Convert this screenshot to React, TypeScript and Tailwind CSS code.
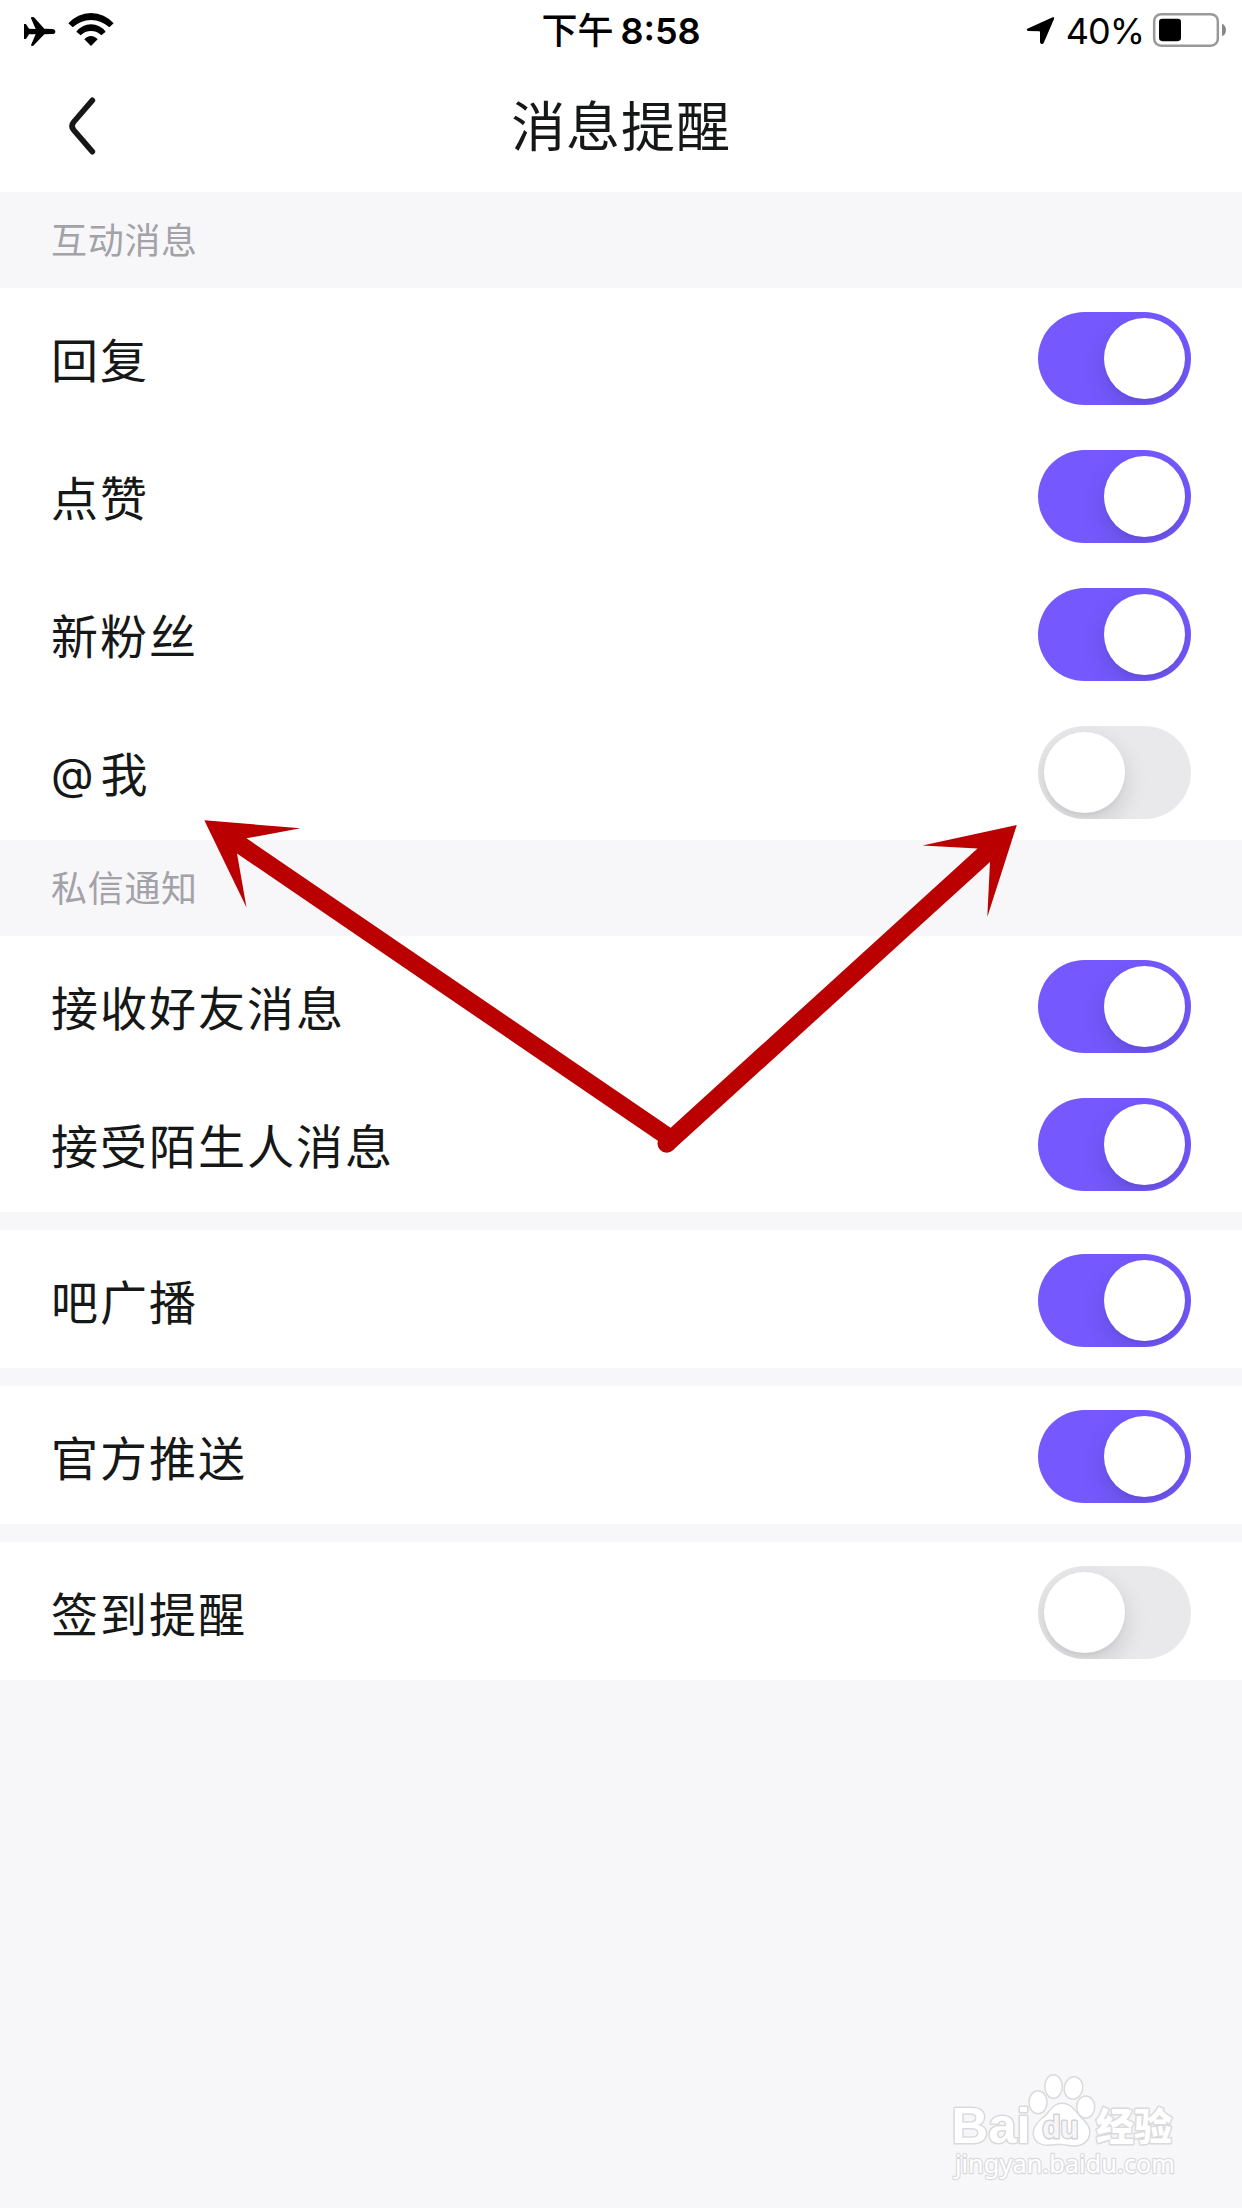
import { useState } from 'react';

type Item = { label: string; on: boolean };
type Section = { title?: string; items: Item[] };

const sections: Section[] = [
  {
    title: '互动消息',
    items: [
      { label: '回复', on: true },
      { label: '点赞', on: true },
      { label: '新粉丝', on: true },
      { label: '@我', on: false },
    ],
  },
  {
    title: '私信通知',
    items: [
      { label: '接收好友消息', on: true },
      { label: '接受陌生人消息', on: true },
    ],
  },
  { items: [{ label: '吧广播', on: true }] },
  { items: [{ label: '官方推送', on: true }] },
  { items: [{ label: '签到提醒', on: false }] },
];

function StatusBar() {
  return (
    <div className="grid h-[60px] grid-cols-3 items-start font-['Inter','Noto_Sans_CJK_SC',sans-serif] text-[36px] leading-[62px] text-black">
      <div className="flex pl-6 pt-3">
        <svg className="h-[36px] w-[92px]" viewBox="72 36 276 108">
          <path d="M72 72L77 72Q79 73 80 75L87 86L107 87L93 55Q92 51 96 51L100 51Q102 52 104 54L133 86L156 87Q166 88 166 95Q166 102 156 102L133 103L102 135Q100 138 97 138L95 138Q92 137 94 133L107 103L87 103L80 114Q79 116 77 117L72 117Z" />
          <path d="M205 70A90 90 0 0 1 341 70L328 82A80 80 0 0 0 218 82ZM229 95A55 55 0 0 1 317 95L304 106A43 43 0 0 0 242 106ZM253 118A25 25 0 0 1 293 118L273 138Z" />
        </svg>
      </div>
      <div className="flex items-center justify-center gap-[7px] whitespace-nowrap">
        <span className="font-medium">下午</span>
        <span className="font-semibold">8:58</span>
      </div>
      <div className="flex items-start justify-end pr-[15px]">
        <svg className="mr-[11px] mt-[15px] h-[31px] w-[29px]" viewBox="137 45 87 93">
          <path d="M141 86L217 52Q223 50 221 57L190 129Q187 134 182 131Q179 129 179 126L179 96Q179 94 177 94L144 93Q136 91 141 86Z" />
        </svg>
        <span className="mr-[8px] tracking-[-1px]">40%</span>
        <svg className="mt-3 h-[36px] w-[75px]" viewBox="516 36 225 108">
          <rect x="522.5" y="42.500" width="191" height="94.500" rx="21" fill="none" stroke="#999" strokeWidth="7.500" />
          <rect x="537" y="56.500" width="66" height="67" rx="10" />
          <path d="M726 71Q738 76 738 90Q738 104 726 109Z" fill="#888" />
        </svg>
      </div>
    </div>
  );
}

function NavBar() {
  return (
    <div className="grid h-[132px] grid-cols-3 items-start text-[#161717]">
      <button className="ml-[66px] mt-[34px] h-[64px] w-[33px]" aria-label="返回">
        <svg className="h-[64px] w-[33px]" viewBox="198 282 99 192">
          <path d="M277 301L221 366Q211 378 221 390L277 455" fill="none" stroke="currentColor" strokeWidth="17" strokeLinecap="round" />
        </svg>
      </button>
      <h1 className="mt-[24px] text-center text-[54px] leading-[80px] tracking-[0.9px]">消息提醒</h1>
    </div>
  );
}

function Toggle({ initial }: { initial: boolean }) {
  const [on, setOn] = useState(initial);
  return (
    <button
      role="switch"
      aria-checked={on}
      onClick={() => setOn(!on)}
      className={`flex h-[93px] w-[153px] overflow-hidden rounded-full p-[6px] ${on ? 'justify-end bg-[#7559ff]' : 'justify-start bg-[#e9e9eb]'}`}
    >
      <span className="size-[81px] rounded-full bg-white shadow-[0_9px_24px_rgba(0,0,0,0.14),0_3px_3px_rgba(0,0,0,0.03)]" />
    </button>
  );
}

function Label({ text }: { text: string }) {
  const mention = text.startsWith('@');
  return (
    <span className="mt-[10px] text-[47px] leading-[72px] tracking-[2px] text-[#161717]">
      {mention && <span className="relative -top-0.5 mr-[7px] font-['Inter'] text-[44px] tracking-normal">@</span>}
      {mention ? text.slice(1) : text}
    </span>
  );
}

function Row({ label, on }: Item) {
  return (
    <div className="flex h-[138px] items-start justify-between bg-white pl-[51px] pr-[51px] pt-6">
      <Label text={label} />
      <Toggle initial={on} />
    </div>
  );
}

function Arrows() {
  return (
    <svg className="pointer-events-none absolute left-[200px] top-[816px] h-[340px] w-[820px]" viewBox="200 816 820 340" fill="#ba0000">
      <path d="M204.300 820.300L300.500 828.300L246.500 838.300L671 1128L664 1145L237 853.500L246.500 907.500Z" />
      <path d="M1016.800 825L922.500 845.500L977.500 848.500L660.500 1137L673 1150L990 862L987.300 917Z" />
      <circle cx="666.700" cy="1143.500" r="9.200" />
    </svg>
  );
}

function Watermark() {
  return (
    <svg
      className="pointer-events-none absolute bottom-0 right-0 h-[168px] w-[342px]"
      viewBox="900 2040 342 168"
      fill="#fff"
      stroke="#dadadc"
      strokeWidth="3"
      strokeLinejoin="round"
      paintOrder="stroke"
    >
      <text x="951.500" y="2143" fontSize="50" fontWeight="700" textLength="79" lengthAdjust="spacingAndGlyphs" fontFamily="Liberation Sans, sans-serif">Bai</text>
      <ellipse cx="1038" cy="2102.300" rx="8.300" ry="10.800" />
      <ellipse cx="1053.500" cy="2086.500" rx="8" ry="11" />
      <ellipse cx="1073.500" cy="2088" rx="8.500" ry="10.500" transform="rotate(12 1073.500 2088)" />
      <ellipse cx="1085.700" cy="2107" rx="8.300" ry="10.300" />
      <path d="M1062 2104C1054 2104 1052 2110 1046 2116C1038 2122 1034 2127 1034 2133C1034 2142 1042 2145 1049 2144.500C1056 2143 1066 2144 1070 2145C1082 2146.500 1089 2141 1089 2132C1089 2124 1082 2120 1078 2115C1073 2109 1070 2104 1062 2104Z" />
      <text x="1042.500" y="2138" fontSize="31" fontWeight="700" textLength="36" lengthAdjust="spacingAndGlyphs" fontFamily="Liberation Sans, sans-serif" fill="#f6f6f8" stroke="#d2d2d4">du</text>
      <text x="1096" y="2140" fontSize="38" fontWeight="900" textLength="76" lengthAdjust="spacingAndGlyphs" fontFamily="Noto Sans CJK SC, sans-serif">经验</text>
      <text x="955" y="2173" fontSize="26" textLength="220" lengthAdjust="spacingAndGlyphs" fontFamily="Noto Sans, sans-serif" strokeWidth="2.500">jingyan.baidu.com</text>
    </svg>
  );
}

export default function App() {
  return (
    <div className="relative h-[2208px] w-[1242px] overflow-hidden bg-[#f7f7fa] font-['Noto_Sans_CJK_SC',sans-serif]">
      <header className="bg-white">
        <StatusBar />
        <NavBar />
      </header>
      <main>
        {sections.map((section, i) => (
          <section key={i} className={section.title ? '' : 'mt-[18px]'}>
            {section.title && (
              <h2 className="flex h-24 items-center pb-[4px] pl-[51px] text-[36px] leading-[54px] tracking-[0.7px] text-[#a3a2a8]">{section.title}</h2>
            )}
            {section.items.map((item) => (
              <Row key={item.label} {...item} />
            ))}
          </section>
        ))}
      </main>
      <Arrows />
      <Watermark />
    </div>
  );
}
